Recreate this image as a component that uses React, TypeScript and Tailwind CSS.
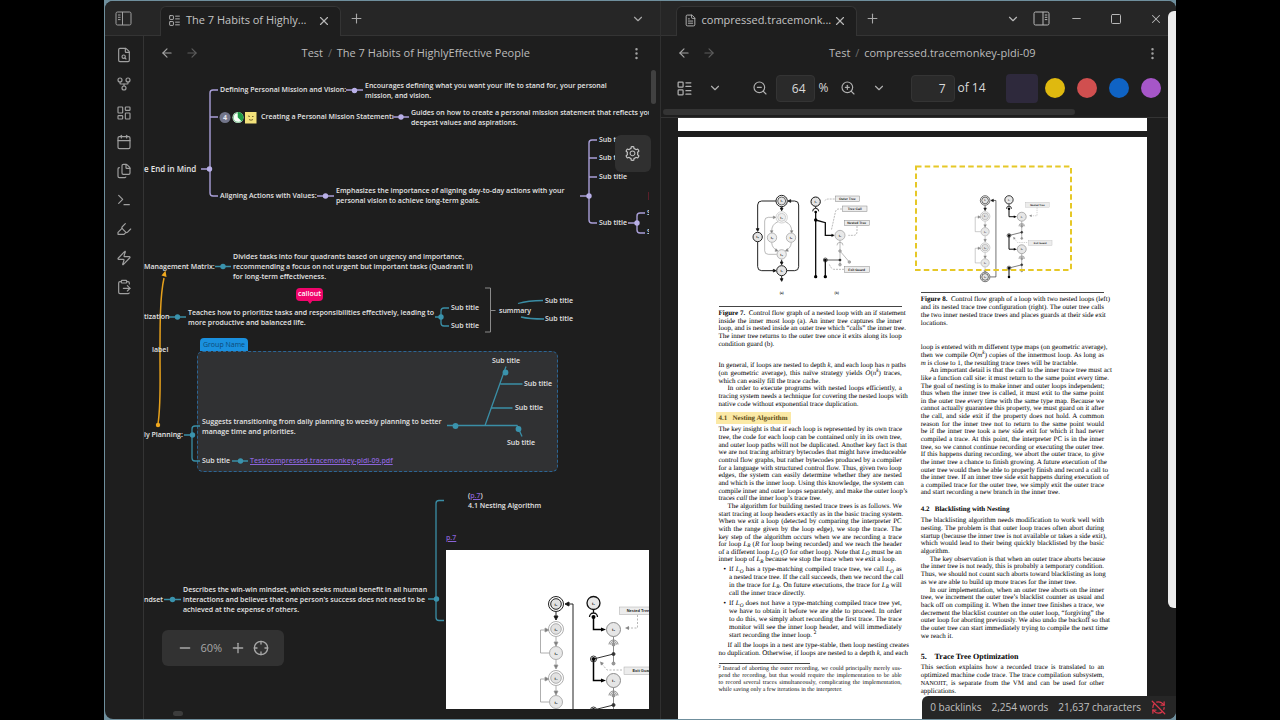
import type { ReactNode } from "react";
import {
  ArrowLeft,
  ArrowRight,
  Calendar,
  ChevronDown,
  ClipboardPaste,
  Crosshair,
  EllipsisVertical,
  Files,
  FileSearch,
  FileText,
  GitFork,
  Highlighter,
  LayoutDashboard,
  LayoutList,
  Minus,
  Plus,
  RefreshCwOff,
  Square,
  Terminal,
  X,
  Zap,
  ZoomIn,
  ZoomOut,
} from "lucide-react";
import { AiOutlineSetting } from "react-icons/ai";

const ribbon = [
  { label: "Quick switcher", Icon: FileSearch },
  { label: "Graph view", Icon: GitFork },
  { label: "Canvas", Icon: LayoutDashboard },
  { label: "Daily note", Icon: Calendar },
  { label: "Templates", Icon: Files },
  { label: "Command palette", Icon: Terminal },
  { label: "Highlights", Icon: Highlighter },
  { label: "Quick action", Icon: Zap },
  { label: "Paste", Icon: ClipboardPaste },
];

const swatches = [
  { label: "Yellow", color: "bg-[#dfb90f]" },
  { label: "Red", color: "bg-[#d04f4f]" },
  { label: "Blue", color: "bg-[#0f63c4]" },
  { label: "Purple", color: "bg-[#a656c8]" },
];

const nodes: { at: string; lines: string[] }[] = [
  { at: "left-[76px] top-[15px]", lines: ["Defining Personal Mission and Vision:"] },
  { at: "left-[221px] top-[11px]", lines: ["Encourages defining what you want your life to stand for, your personal", "mission, and vision."] },
  { at: "left-[117px] top-[42px]", lines: ["Creating a Personal Mission Statement:"] },
  { at: "left-[267px] top-[38px]", lines: ["Guides on how to create a personal mission statement that reflects your", "deepest values and aspirations."] },
  { at: "left-[76px] top-[121px]", lines: ["Aligning Actions with Values:"] },
  { at: "left-[192px] top-[116px]", lines: ["Emphasizes the importance of aligning day-to-day actions with your", "personal vision to achieve long-term goals."] },
  { at: "left-[455px] top-[65px]", lines: ["Sub title"] },
  { at: "left-[455px] top-[83px]", lines: ["Sub title"] },
  { at: "left-[455px] top-[102px]", lines: ["Sub title"] },
  { at: "left-[455px] top-[148px]", lines: ["Sub title"] },
  { at: "left-[503px] top-[138px]", lines: ["Sub title"] },
  { at: "left-[503px] top-[157px]", lines: ["Sub title"] },
  { at: "left-0 top-[192px]", lines: ["Management Matrix:"] },
  { at: "left-[89px] top-[182px]", lines: ["Divides tasks into four quadrants based on urgency and importance,", "recommending a focus on not urgent but important tasks (Quadrant II)", "for long-term effectiveness."] },
  { at: "left-0 top-[242px]", lines: ["tization"] },
  { at: "left-[44px] top-[238px]", lines: ["Teaches how to prioritize tasks and responsibilities effectively, leading to", "more productive and balanced life."] },
  { at: "left-[307px] top-[233px]", lines: ["Sub title"] },
  { at: "left-[307px] top-[251px]", lines: ["Sub title"] },
  { at: "left-[355px] top-[236px]", lines: ["summary"] },
  { at: "left-[401px] top-[226px]", lines: ["Sub title"] },
  { at: "left-[401px] top-[244px]", lines: ["Sub title"] },
  { at: "left-[8px] top-[275px]", lines: ["label"] },
  { at: "left-0 top-[360px]", lines: ["ly Planning:"] },
  { at: "left-[58px] top-[347px]", lines: ["Suggests transitioning from daily planning to weekly planning to better", "manage time and priorities."] },
  { at: "left-[58px] top-[386px]", lines: ["Sub title"] },
  { at: "left-[348px] top-[286px]", lines: ["Sub title"] },
  { at: "left-[380px] top-[309px]", lines: ["Sub title"] },
  { at: "left-[371px] top-[333px]", lines: ["Sub title"] },
  { at: "left-[363px] top-[368px]", lines: ["Sub title"] },
  { at: "left-0 top-[525px]", lines: ["ndset"] },
  { at: "left-[39px] top-[515px]", lines: ["Describes the win-win mindset, which seeks mutual benefit in all human", "interactions and believes that one person's success does not need to be", "achieved at the expense of others."] },
];

function SidebarToggle({ side }: { side: "left" | "right" }) {
  return (
    <svg width="17" height="15" viewBox="0 0 17 15" fill="none" stroke="currentColor">
      <rect x="1" y="1" width="15" height="13" rx="1.5" />
      {side === "left" ? (
        <path d="M7.5 1v13M3 4h2.5M3 6.3h2.5M3 8.6h2.5" />
      ) : (
        <path d="M10 1v13M11.8 4h2.5M11.8 6.3h2.5M11.8 8.6h2.5" />
      )}
    </svg>
  );
}

function Tab({ title, icon }: { title: string; icon: ReactNode }) {
  return (
    <div className="relative -mb-px flex h-[30px] w-[181px] items-center rounded-t-md border border-b-0 border-[#343434] bg-[#1e1e1e] pb-[2px] pl-[7px] text-[#b6b6b6]">
      <span className="shrink-0">{icon}</span>
      <span className="ml-[5px] flex-1 whitespace-nowrap text-[11px] text-[#c4c4c4]">{title}</span>
      <button aria-label="Close tab" className="mr-[9px]">
        <X size={14} strokeWidth={2} />
      </button>
    </div>
  );
}

function ViewHeader({ title }: { title: string }) {
  return (
    <div className="flex h-[34px] shrink-0 items-center px-4 text-[#a3a3a3]">
      <button aria-label="Back">
        <ArrowLeft size={14} />
      </button>
      <button aria-label="Forward" className="ml-[11px] text-[#5c5c5c]">
        <ArrowRight size={14} />
      </button>
      <div className="flex-1 pl-1 text-center text-[11px] whitespace-nowrap text-[#bcbcbc]">
        Test <span className="px-[2px] text-[#6d6d6d]">/</span> {title}
      </div>
      <button aria-label="More options">
        <EllipsisVertical size={15} />
      </button>
    </div>
  );
}

function Connectors() {
  return (
    <svg className="absolute top-0 left-0 h-[639px] w-[505px]" viewBox="144 70 505 639" fill="none">
      <g stroke="#a99fd8" strokeWidth="1.4">
        <path d="M201 169h8M218 90h-5q-3 0-3 3v100q0 3 3 3h5M210 117h8M346 90h17M392 117h17M317 196h17" />
        <path d="M580 196h8M597 140h-5q-3 0-3 3v77q0 3 3 3h5M589 158h8M589 177h8M628 223h9M645 213h-5q-3 0-3 3v14q0 3 3 3h5" />
      </g>
      <g fill="#b9b0e8">
        <circle cx="209.500" cy="169" r="2.700" />
        <circle cx="354.500" cy="90.500" r="2.700" />
        <circle cx="401" cy="117" r="2.700" />
        <circle cx="325.500" cy="196" r="2.700" />
        <circle cx="589" cy="196" r="2.700" />
        <circle cx="637" cy="223" r="2.700" />
      </g>
      <g stroke="#3a8ea6" strokeWidth="1.3">
        <path d="M215 266.500h16M169 317h17M435 317h6M449 308h-5q-3 0-3 3v12q0 3 3 3h5" />
        <path d="M518 303.500q10-3 25-3M521 317q8 2 23 2" />
        <path d="M184 435h8M200 426h-5q-3 0-3 3v29q0 3 3 3h5M232 461h16" />
        <path d="M447 425.500h70l5 11M485 425.500l21-59M500.500 384h22M491.500 408h21" />
        <path d="M164 599.500h17M428 599h8M444 500.500h-5q-3 0-3 3v114q0 3 3 3h5" />
      </g>
      <g fill="#3a93ad">
        <circle cx="223" cy="266.500" r="2.700" />
        <circle cx="177.500" cy="317" r="2.700" />
        <circle cx="441" cy="317" r="2.700" />
        <circle cx="192.500" cy="435" r="2.700" />
        <circle cx="240.500" cy="461" r="2.700" />
        <circle cx="455.500" cy="426" r="2.900" />
        <circle cx="505.500" cy="372.500" r="2.900" />
        <circle cx="518.500" cy="429" r="2.900" />
        <circle cx="172.500" cy="599.500" r="2.700" />
        <circle cx="436.500" cy="599" r="2.700" />
      </g>
      <path d="M485 288h5.500v44H485M490.500 310.500h5" stroke="#8a8a8a" />
      <path d="M158 424c3-20 2-40 2-70s0-58 4-76" stroke="#e5a01c" strokeWidth="1.5" />
      <path d="M165.500 270.500l1 6.500-5-1.500z" fill="#f0a81e" />
      <circle cx="158" cy="425" r="2.200" fill="#f0a81e" />
      <path d="M648.500 192v8" stroke="#5a1f2a" />

      <circle cx="225" cy="117.500" r="5.500" fill="#72758a" />
      <text x="225" y="120.200" fontSize="7" fontWeight="700" textAnchor="middle" fill="#e8e8f0">4</text>
      <circle cx="238" cy="117.500" r="5.500" fill="#f1f7f1" />
      <path d="M238 112.800a4.700 4.700 0 1 0 4.400 6.400L238 117.500z" fill="#f8fff8" stroke="#31a352" strokeWidth=".6" />
      <path d="M238 112a5.500 5.500 0 0 1 3.700 9.500L238 117.500z" fill="#1f9c46" />
      <rect x="245" y="112" width="11.500" height="11.500" fill="#f3e27b" />
      <path d="M248 116l2 .5M253.500 116.500h-1.500M249 119.500q2 1.500 4 0" stroke="#5b4c1c" strokeWidth=".8" />
    </svg>
  );
}

// Trace tree with two nested loops, shared by the embedded crop and the PDF figure.
function NestedLoopGraph() {
  const arc = "a3 3 0 0 1 6 0";
  return (
    <g fill="none" fontFamily="Liberation Sans" fontWeight="700">
      <g stroke="#222" strokeWidth="1">
        <circle cx="110" cy="54" r="7.500" />
        <circle cx="110" cy="54" r="5.300" fill="#e2e2e2" />
        <circle cx="110" cy="174" r="7.500" />
        <circle cx="110" cy="174" r="5.300" fill="#e2e2e2" />
        <path d="M118 174h9V54h-7M110 62v6" />
        <path d="M123 52l-4 2 4 2zM108 66l2 4 2-4z" fill="#111" />
      </g>
      <g stroke="#9b9b9b" strokeWidth=".8">
        {[79, 128].map((y) => (
          <g key={y}>
            <circle cx="110" cy={y} r="7.500" />
            <circle cx="110" cy={y} r="5.300" fill="#e2e2e2" />
            <circle cx="110" cy={y + 24} r="6.500" fill="#e8e8e8" />
            <path d={`M110 ${y + 8}v9M110 ${y + 31}v8M103 ${y + 24}h-8.500v-23h6`} />
            <path d={`M108 ${y + 13}l2 4 2-4zM108 ${y + 36}l2 4 2-4zM99 ${y - 1}l4 2-4 2z`} fill="#777" />
          </g>
        ))}
      </g>
      <circle cx="147.500" cy="53" r="6.500" fill="#e8e8e8" stroke="#111" strokeWidth="1.300" />
      <path d="M147.500 60v3M143.500 67a4 4 0 0 1 8 0" stroke="#111" strokeWidth="1.300" />
      <path d="M147.500 67v12.500h9M147.500 109v21.500h9M147.500 159v15" stroke="#000" strokeWidth="1.500" />
      <path d="M155 77.500l5 2-5 2zM155 128.500l5 2-5 2z" fill="#000" />
      {[79.5, 130.5].map((y) => (
        <g key={y} stroke="#8b8b8b">
          <circle cx="167.500" cy={y} r="7" fill="#e6e6e6" />
          <path d={`M167.500 ${y + 7}v27M163 ${y + 15}a4.500 4.500 0 0 1 9 0`} />
          <path d={`M164.500 ${y + 15}${arc}`} />
          <path d={`M167.500 ${y + 24.5}l-20 5`} stroke="#333" />
          <circle cx="167.500" cy={y + 15} r="1.500" fill="#999" />
          <circle cx="167.500" cy={y + 24.5} r="1.500" fill="#333" stroke="#333" />
          <circle cx="167.500" cy={y + 34} r="1.500" fill="#999" />
          <circle cx="147.500" cy={y + 29.5} r="3" stroke="#333" />
          <circle cx="147.500" cy={y + 29.5} r="1.500" fill="#000" stroke="#000" />
        </g>
      ))}
      <circle cx="147.500" cy="67" r="2" fill="#000" />
      <circle cx="147.500" cy="174" r="2" fill="#000" />
      <path d="M191.500 65v13h-10M176 120h-15l-5-6" stroke="#999" strokeWidth=".7" strokeDasharray="2 1.500" />
      <path d="M183 76l-4 2 4 2zM158 113l-4-1.500 1 4z" fill="#888" />
      <rect x="173.500" y="57" width="37" height="7.500" fill="#ececec" stroke="#aaa" strokeWidth=".5" />
      <rect x="178" y="117" width="37" height="7.500" fill="#ececec" stroke="#aaa" strokeWidth=".5" />
      <g fill="#222" textAnchor="middle" fontSize="4">
        <text x="192" y="62.300">Nested Tree</text>
        <text x="196.500" y="122.300">Exit Guard</text>
        <text x="110" y="55.500">t₁</text>
        <text x="110" y="80.500">t₂</text>
        <text x="110" y="104.500">t₃</text>
        <text x="110" y="129.500">t₄</text>
        <text x="110" y="153.500">t₅</text>
        <text x="110" y="175.500">t₆</text>
        <text x="147.500" y="54.500">t₁</text>
        <text x="167.500" y="81">t₂</text>
        <text x="167.500" y="132">t₄</text>
      </g>
    </g>
  );
}

function FigureSeven() {
  return (
    <svg className="h-[119px] w-[183px]" viewBox="57 21 549 357" fill="none" fontFamily="Liberation Sans">
      <g stroke="#222" strokeWidth="3">
        <circle cx="245" cy="63" r="17" />
        <circle cx="245" cy="63" r="12" fill="#e4e4e4" strokeWidth="2" />
        <circle cx="173" cy="171" r="14" fill="#e4e4e4" />
        <circle cx="245" cy="272" r="15" fill="#e4e4e4" />
        <path d="M228 63h-43q-12 0-12 12v72M173 186v74q0 12 12 12h36M261 272h23q12 0 12-12V75q0-12-12-12h-15M245 80v6M245 239v8M245 288v10" />
        <path d="M169 146l4 8 4-8zM220 268l8 4-8 4zM272 59l-8 4 8 4zM241 84l4 8 4-8zM241 246l4 8 4-8zM241 296l4 8 4-8z" fill="#000" />
      </g>
      <g stroke="#999" strokeWidth="2">
        <circle cx="245" cy="112" r="17" stroke="#bbb" />
        <circle cx="245" cy="112" r="12" fill="#eee" stroke="#bbb" />
        <circle cx="216" cy="173" r="14" fill="#eee" />
        <circle cx="273" cy="173" r="14" fill="#eee" />
        <circle cx="245" cy="223" r="14" fill="#eee" />
        <path d="M234 125q-19 8-19 28M256 125q19 8 19 28M215 188q2 18 16 22M274 188q-2 18-16 22M230 223h-25q-11 0-11-11v-89q0-11 11-11h18" />
        <path d="M211 152l4 7 4-7zM271 152l4 7 4-7zM220 108l7 4-7 4zM228 206l6 7-9 1zM262 206l-6 7 9 1z" fill="#777" />
      </g>
      <g stroke="#111" strokeWidth="4">
        <circle cx="347" cy="65" r="14" fill="#e4e4e4" strokeWidth="3" />
        <path d="M347 80v4M338 94a9 9 0 0 1 18 0" strokeWidth="3" />
        <path d="M347 95v195M347 120l29 8v38h20M376 240v50" />
        <path d="M376 240h44" strokeWidth="2" />
        <path d="M395 162l8 4-8 4z" fill="#000" strokeWidth="1" />
        <circle cx="376" cy="240" r="6" strokeWidth="2" />
      </g>
      <g fill="#000">
        <circle cx="347" cy="96" r="4" />
        <circle cx="347" cy="120" r="5" />
        <circle cx="347" cy="290" r="5" />
        <circle cx="376" cy="240" r="4" />
        <circle cx="376" cy="290" r="5" />
        <circle cx="420" cy="240" r="4" />
      </g>
      <g stroke="#999" strokeWidth="2">
        <circle cx="420" cy="166" r="15" fill="#e8e8e8" />
        <path d="M420 181v73M411 196a9 9 0 0 1 18 0M420 213l28 33" />
        <circle cx="420" cy="213" r="4" fill="#aaa" />
        <circle cx="448" cy="246" r="4" fill="#aaa" />
        <circle cx="420" cy="254" r="4" fill="#aaa" />
      </g>
      <g stroke="#999" strokeWidth="2" strokeDasharray="6 3">
        <path d="M404 57h-18q-7 0-12 5M426 87h-10q-8 0-10 10l-12 54M471 138v16q0 12-10 12h-16M432 268h-30q-8 0-14-15" />
      </g>
      <g fill="#ececec" stroke="#888" strokeWidth="1.500">
        <rect x="406" y="48" width="73" height="17" />
        <rect x="427" y="78" width="74" height="17" />
        <rect x="433" y="121" width="75" height="16" />
        <rect x="433" y="260" width="75" height="17" />
      </g>
      <g fill="#222" textAnchor="middle" fontSize="10" fontWeight="700">
        <text x="442" y="60">Outer Tree</text>
        <text x="464" y="90">Tree Call</text>
        <text x="470" y="133">Nested Tree</text>
        <text x="470" y="272">Exit Guard</text>
        <text x="245" y="67">t₁</text>
        <text x="245" y="116">t₂</text>
        <text x="216" y="177">t₃</text>
        <text x="273" y="177">t₄</text>
        <text x="173" y="175">t₆</text>
        <text x="245" y="227">t₅</text>
        <text x="245" y="276">t₇</text>
        <text x="347" y="69">t₁</text>
        <text x="420" y="170">t₂</text>
        <text x="245" y="343">(a)</text>
        <text x="410" y="341">(b)</text>
      </g>
    </svg>
  );
}

function FigureEight() {
  return (
    <svg className="-ml-[6px] h-[155px] w-[190px] max-w-none" viewBox="915 137 190 155" fill="none">
      <svg x="915" y="166" width="155.500" height="125" viewBox="0 0 244 196">
        <NestedLoopGraph />
      </svg>
      <rect x="916" y="166.500" width="155" height="103.500" stroke="#e6c827" strokeWidth="2" strokeDasharray="5.500 3.200" />
    </svg>
  );
}

// Every line is set full measure; `last` marks the lines that end a paragraph,
// `indent` the ones that open it.
function Line({ children, last, indent }: { children: ReactNode; last?: boolean; indent?: boolean }) {
  return (
    <span
      className={`block h-[7px] whitespace-nowrap ${last ? "" : "[text-align-last:justify]"} ${indent ? "pl-[9px]" : ""}`}
    >
      {children}
    </span>
  );
}

const para = "flex flex-col justify-around";

function LeftColumn() {
  return (
    <div className="flex min-w-0 flex-1 flex-col pt-[50px]">
      <FigureSeven />
      <hr className="border-[#444]" />
      <p className={`${para} mt-[3px] h-[38px]`}>
        <Line><b>Figure 7.</b>&nbsp; Control flow graph of a nested loop with an if statement</Line>
        <Line>inside the inner most loop (a). An inner tree captures the inner</Line>
        <Line>loop, and is nested inside an outer tree which “calls” the inner tree.</Line>
        <Line>The inner tree returns to the outer tree once it exits along its loop</Line>
        <Line last>condition guard (b).</Line>
      </p>
      <p className={`${para} mt-[14px] h-[46px]`}>
        <Line>In general, if loops are nested to depth <i>k</i>, and each loop has <i>n</i> paths</Line>
        <Line>(on geometric average), this naïve strategy yields <i>O</i>(<i>n<sup>k</sup></i>) traces,</Line>
        <Line last>which can easily fill the trace cache.</Line>
        <Line indent>In order to execute programs with nested loops efficiently, a</Line>
        <Line>tracing system needs a technique for covering the nested loops with</Line>
        <Line last>native code without exponential trace duplication.</Line>
      </p>
      <h3 className="mt-[4px] -ml-[3px] self-start bg-[#fbe9a6] px-[3px] text-[7px] leading-[12px] font-bold whitespace-pre text-[#5c4a14]">4.1   Nesting Algorithm</h3>
      <p className={`${para} mt-[2px] h-[138px]`}>
        <Line>The key insight is that if each loop is represented by its own trace</Line>
        <Line>tree, the code for each loop can be contained only in its own tree,</Line>
        <Line>and outer loop paths will not be duplicated. Another key fact is that</Line>
        <Line>we are not tracing arbitrary bytecodes that might have irreduceable</Line>
        <Line>control flow graphs, but rather bytecodes produced by a compiler</Line>
        <Line>for a language with structured control flow. Thus, given two loop</Line>
        <Line>edges, the system can easily determine whether they are nested</Line>
        <Line>and which is the inner loop. Using this knowledge, the system can</Line>
        <Line>compile inner and outer loops separately, and make the outer loop’s</Line>
        <Line last>traces <i>call</i> the inner loop’s trace tree.</Line>
        <Line indent>The algorithm for building nested trace trees is as follows. We</Line>
        <Line>start tracing at loop headers exactly as in the basic tracing system.</Line>
        <Line>When we exit a loop (detected by comparing the interpreter PC</Line>
        <Line>with the range given by the loop edge), we stop the trace. The</Line>
        <Line>key step of the algorithm occurs when we are recording a trace</Line>
        <Line>for loop <i>L<sub>R</sub></i> (<i>R</i> for loop being recorded) and we reach the header</Line>
        <Line>of a different loop <i>L<sub>O</sub></i> (<i>O</i> for other loop). Note that <i>L<sub>O</sub></i> must be an</Line>
        <Line last>inner loop of <i>L<sub>R</sub></i> because we stop the trace when we exit a loop.</Line>
      </p>
      <ul className="mt-[2px] flex flex-col gap-[3px] pl-[5px]">
        <li className="flex gap-[3px]">
          <span>•</span>
          <div className={`${para} h-[31px] min-w-0 flex-1`}>
            <Line>If <i>L<sub>O</sub></i> has a type-matching compiled trace tree, we call <i>L<sub>O</sub></i> as</Line>
            <Line>a nested trace tree. If the call succeeds, then we record the call</Line>
            <Line>in the trace for <i>L<sub>R</sub></i>. On future executions, the trace for <i>L<sub>R</sub></i> will</Line>
            <Line last>call the inner trace directly.</Line>
          </div>
        </li>
        <li className="flex gap-[3px]">
          <span>•</span>
          <div className={`${para} h-[39px] min-w-0 flex-1`}>
            <Line>If <i>L<sub>O</sub></i> does not have a type-matching compiled trace tree yet,</Line>
            <Line>we have to obtain it before we are able to proceed. In order</Line>
            <Line>to do this, we simply abort recording the first trace. The trace</Line>
            <Line>monitor will see the inner loop header, and will immediately</Line>
            <Line last>start recording the inner loop. <sup>2</sup></Line>
          </div>
        </li>
      </ul>
      <p className={`${para} mt-[3px] h-[15px]`}>
        <Line indent>If all the loops in a nest are type-stable, then loop nesting creates</Line>
        <Line>no duplication. Otherwise, if loops are nested to a depth <i>k</i>, and each</Line>
      </p>
      <hr className="mt-[6px] w-1/2 border-[#444]" />
      <p className="mt-[2px] text-[6px]">
        <Line><sup>2</sup> Instead of aborting the outer recording, we could principally merely sus-</Line>
        <Line>pend the recording, but that would require the implementation to be able</Line>
        <Line>to record several traces simultaneously, complicating the implementation,</Line>
        <Line last>while saving only a few iterations in the interpreter.</Line>
      </p>
    </div>
  );
}

function RightColumn() {
  return (
    <div className="flex min-w-0 flex-1 flex-col">
      <FigureEight />
      <hr className="border-[#444]" />
      <p className={`${para} mt-[3px] h-[31px]`}>
        <Line><b>Figure 8.</b>&nbsp; Control flow graph of a loop with two nested loops (left)</Line>
        <Line>and its nested trace tree configuration (right). The outer tree calls</Line>
        <Line>the two inner nested trace trees and places guards at their side exit</Line>
        <Line last>locations.</Line>
      </p>
      <p className={`${para} mt-[17px] h-[153px]`}>
        <Line>loop is entered with <i>m</i> different type maps (on geometric average),</Line>
        <Line>then we compile <i>O</i>(<i>m<sup>k</sup></i>) copies of the innermost loop. As long as</Line>
        <Line last><i>m</i> is close to 1, the resulting trace trees will be tractable.</Line>
        <Line indent>An important detail is that the call to the inner trace tree must act</Line>
        <Line>like a function call site: it must return to the same point every time.</Line>
        <Line>The goal of nesting is to make inner and outer loops independent;</Line>
        <Line>thus when the inner tree is called, it must exit to the same point</Line>
        <Line>in the outer tree every time with the same type map. Because we</Line>
        <Line>cannot actually guarantee this property, we must guard on it after</Line>
        <Line>the call, and side exit if the property does not hold. A common</Line>
        <Line>reason for the inner tree not to return to the same point would</Line>
        <Line>be if the inner tree took a new side exit for which it had never</Line>
        <Line>compiled a trace. At this point, the interpreter PC is in the inner</Line>
        <Line>tree, so we cannot continue recording or executing the outer tree.</Line>
        <Line>If this happens during recording, we abort the outer trace, to give</Line>
        <Line>the inner tree a chance to finish growing. A future execution of the</Line>
        <Line>outer tree would then be able to properly finish and record a call to</Line>
        <Line>the inner tree. If an inner tree side exit happens during execution of</Line>
        <Line>a compiled trace for the outer tree, we simply exit the outer trace</Line>
        <Line last>and start recording a new branch in the inner tree.</Line>
      </p>
      <h3 className="mt-[6px] text-[7px] leading-[12px] font-bold whitespace-pre">4.2   Blacklisting with Nesting</h3>
      <p className={`${para} mt-[2px] h-[123px]`}>
        <Line>The blacklisting algorithm needs modification to work well with</Line>
        <Line>nesting. The problem is that outer loop traces often abort during</Line>
        <Line>startup (because the inner tree is not available or takes a side exit),</Line>
        <Line>which would lead to their being quickly blacklisted by the basic</Line>
        <Line last>algorithm.</Line>
        <Line indent>The key observation is that when an outer trace aborts because</Line>
        <Line>the inner tree is not ready, this is probably a temporary condition.</Line>
        <Line>Thus, we should not count such aborts toward blacklisting as long</Line>
        <Line last>as we are able to build up more traces for the inner tree.</Line>
        <Line indent>In our implementation, when an outer tree aborts on the inner</Line>
        <Line>tree, we increment the outer tree’s blacklist counter as usual and</Line>
        <Line>back off on compiling it. When the inner tree finishes a trace, we</Line>
        <Line>decrement the blacklist counter on the outer loop, “forgiving” the</Line>
        <Line>outer loop for aborting previously. We also undo the backoff so that</Line>
        <Line>the outer tree can start immediately trying to compile the next time</Line>
        <Line last>we reach it.</Line>
      </p>
      <h2 className="mt-[11px] text-[8px] leading-[12px] font-bold whitespace-pre">5.    Trace Tree Optimization</h2>
      <p className={`${para} mt-px h-[31px]`}>
        <Line>This section explains how a recorded trace is translated to an</Line>
        <Line>optimized machine code trace. The trace compilation subsystem,</Line>
        <Line><span className="text-[6px]">NANOJIT</span>, is separate from the VM and can be used for other</Line>
        <Line last>applications.</Line>
      </p>
    </div>
  );
}

function MindMap() {
  return (
    <div className="relative flex min-h-0 flex-1 pr-[11px] pb-[10px]">
      <div className="relative flex-1 overflow-hidden text-[7px] leading-[10px] font-semibold text-[#e4e4e4]">
        <div className="absolute top-[281px] left-[53px] h-[121px] w-[361px] rounded-md border border-dashed border-[#2b6595] bg-[#303133]" />
        <div className="absolute top-[268px] left-[56px] h-[13px] w-[48px] rounded-t-sm bg-[#1a90de] text-center leading-[13px] font-normal text-[#0d4a78]">
          Group Name
        </div>
        <Connectors />
        <div className="absolute top-[94px] left-0 text-[8px] whitespace-nowrap">e End in Mind</div>
        {nodes.map((node) => (
          <div key={node.at} className={`absolute whitespace-nowrap ${node.at}`}>
            {node.lines.map((line) => (
              <div key={line}>{line}</div>
            ))}
          </div>
        ))}
        <a href="#pdf" className="absolute top-[386px] left-[106px] whitespace-nowrap text-[#8a63d8] underline">
          Test/compressed.tracemonkey-pldi-09.pdf
        </a>
        <div className="absolute top-[421px] left-[324px] whitespace-nowrap">
          (<a href="#p7" className="text-[#8a63d8] underline">p.7</a>)
          <div>4.1 Nesting Algorithm</div>
        </div>
        <a href="#p7" className="absolute top-[463px] left-[302px] text-[#8a63d8] underline">p.7</a>
        <div className="absolute top-[218px] left-[152px] h-[13px] w-[27px] rounded-sm bg-[#f0056b] text-center leading-[12px] text-white">
          callout
          <span className="absolute top-[12px] left-[11px] border-x-3 border-t-4 border-x-transparent border-t-[#f0056b]" />
        </div>
        <svg className="absolute top-[480px] left-[302px] h-[159px] w-[203px] bg-white" viewBox="0 0 203 159">
          <NestedLoopGraph />
        </svg>
      </div>
      <div className="absolute top-0 right-[4px] h-[34px] w-[5px] rounded-sm bg-[#414141]" />
      <button aria-label="Map settings" className="absolute top-[65px] right-[9px] flex h-[37px] w-[36px] items-center justify-center rounded-md bg-[#303030] text-[#c4c4c4]">
        <AiOutlineSetting size={17} />
      </button>
      <div className="absolute top-[560px] left-[18px] flex h-9 w-[122px] items-center justify-between rounded-md bg-[#323232] px-[15px] text-[#a8a8a8]">
        <button aria-label="Zoom out"><Minus size={16} /></button>
        <span className="text-[11px]">60%</span>
        <button aria-label="Zoom in"><Plus size={16} /></button>
        <button aria-label="Centre map"><Crosshair size={16} /></button>
      </div>
      <div className="absolute bottom-[3px] left-[29px] h-[5px] w-[10px] rounded-full bg-[#3c3c3c]" />
    </div>
  );
}

function PdfToolbar() {
  return (
    <div className="shrink-0 overflow-hidden border-b border-[#343434]">
      <div className="flex h-[36px] items-center pl-[15px] text-[#b0b0b0]">
        <button aria-label="Toggle outline"><LayoutList size={17} strokeWidth={1.75} /></button>
        <button aria-label="Outline options" className="ml-[15px]"><ChevronDown size={14} /></button>
        <button aria-label="Zoom out" className="ml-[30px]"><ZoomOut size={16} strokeWidth={1.75} /></button>
        <label className="ml-2 flex items-center gap-1 text-xs text-[#dadada]">
          <input aria-label="Zoom level" defaultValue="64" className="h-[27px] w-[39px] rounded border border-[#343434] bg-[#2a2a2a] pr-2 text-right" />
          <span className="w-[10px]">%</span>
        </label>
        <button aria-label="Zoom in" className="ml-[11px]"><ZoomIn size={16} strokeWidth={1.75} /></button>
        <button aria-label="Zoom options" className="ml-4"><ChevronDown size={14} /></button>
        <label className="ml-[25px] flex items-center gap-[3px] text-xs whitespace-nowrap text-[#dadada]">
          <input aria-label="Page" defaultValue="7" className="h-[27px] w-[44px] rounded border border-[#343434] bg-[#2a2a2a] pr-2 text-right" />
          of 14
        </label>
        <div className="ml-auto flex items-center gap-[12px] pr-[15px]">
          <button aria-label="No colour" className="-mr-[5px] h-[29px] w-8 rounded bg-[#2e293c]" />
          {swatches.map((swatch) => (
            <button key={swatch.label} aria-label={swatch.label} className={`h-5 w-5 rounded-full ${swatch.color}`} />
          ))}
        </div>
      </div>
      <div className="mt-[3px] mb-[2px] ml-[2px] h-[6px] w-4/5 rounded-full bg-[#343434]" />
    </div>
  );
}

export default function App() {
  return (
    <div className="flex h-screen min-h-[720px] bg-black px-[104px] font-['Open_Sans','Noto_Sans',sans-serif]">
      <div className="flex min-w-0 flex-1 bg-[#6f8f9d] py-px pl-px">
        <div className="relative flex min-w-0 flex-1 overflow-hidden rounded-lg bg-[#1e1e1e]">
          <aside className="flex w-[39px] shrink-0 flex-col text-[#a0a0a0]">
            <div className="flex h-[35px] items-center border-b border-[#343434] bg-[#262626] pl-[10px]">
              <button aria-label="Toggle left sidebar"><SidebarToggle side="left" /></button>
            </div>
            <nav className="flex flex-1 flex-col items-center border-r border-[#343434] pt-[4px]">
              {ribbon.map(({ label, Icon }) => (
                <button key={label} aria-label={label} className="flex h-[29px] items-center">
                  <Icon size={16} strokeWidth={1.75} />
                </button>
              ))}
            </nav>
          </aside>

          <section className="flex min-w-0 flex-1 flex-col border-r border-[#303030]">
            <div className="flex h-[35px] shrink-0 items-end border-b border-[#343434] bg-[#262626] pl-4 text-[#a8a8a8]">
              <Tab title="The 7 Habits of Highly..." icon={<LayoutList size={13} strokeWidth={1.75} />} />
              <button aria-label="New tab" className="mb-[9px] ml-2"><Plus size={15} strokeWidth={1.75} /></button>
              <button aria-label="Tab list" className="mr-[15px] mb-[9px] ml-auto"><ChevronDown size={14} /></button>
            </div>
            <ViewHeader title="The 7 Habits of HighlyEffective People" />
            <MindMap />
          </section>

          <section className="flex min-w-0 flex-1 flex-col">
            <div className="flex h-[35px] shrink-0 items-end border-b border-[#343434] bg-[#262626] pl-[15px] text-[#a8a8a8]">
              <Tab title="compressed.tracemonk..." icon={<FileText size={13} strokeWidth={1.75} />} />
              <button aria-label="New tab" className="mb-[9px] ml-2"><Plus size={15} strokeWidth={1.75} /></button>
              <div className="mr-[13px] mb-[9px] ml-auto flex items-center text-[#b8b8b8]">
                <button aria-label="Tab list"><ChevronDown size={14} /></button>
                <button aria-label="Toggle right sidebar" className="ml-[13px]"><SidebarToggle side="right" /></button>
                <button aria-label="Minimise" className="ml-5"><Minus size={13} strokeWidth={1.75} /></button>
                <button aria-label="Maximise" className="ml-[27px]"><Square size={12} /></button>
                <button aria-label="Close" className="ml-[27px]"><X size={14} strokeWidth={1.75} /></button>
              </div>
            </div>
            <ViewHeader title="compressed.tracemonkey-pldi-09" />
            <PdfToolbar />
            <div className="min-h-0 flex-1 overflow-hidden pr-[29px] pl-[17px]">
              <div className="h-[13px] bg-white" />
              <article className="mt-[6px] flex h-full gap-[19px] bg-white pr-[43px] pl-[41px] font-['Liberation_Serif',serif] text-[7px] leading-[7px] text-black [text-rendering:geometricPrecision]">
                <LeftColumn />
                <RightColumn />
              </article>
            </div>
          </section>

          <div className="absolute top-[10px] right-0 bottom-[111px] w-2 rounded-l-md bg-[#ececec]" />
          <footer className="absolute right-0 bottom-0 flex h-[23px] items-center gap-[10px] rounded-tl-md bg-[#262626] pr-[10px] pl-2 text-[10px] whitespace-nowrap text-[#c0c0c0]">
            <span>0 backlinks</span>
            <span>2,254 words</span>
            <span>21,637 characters</span>
            <RefreshCwOff size={15} className="text-[#d8364a]" />
          </footer>
        </div>
      </div>
    </div>
  );
}
